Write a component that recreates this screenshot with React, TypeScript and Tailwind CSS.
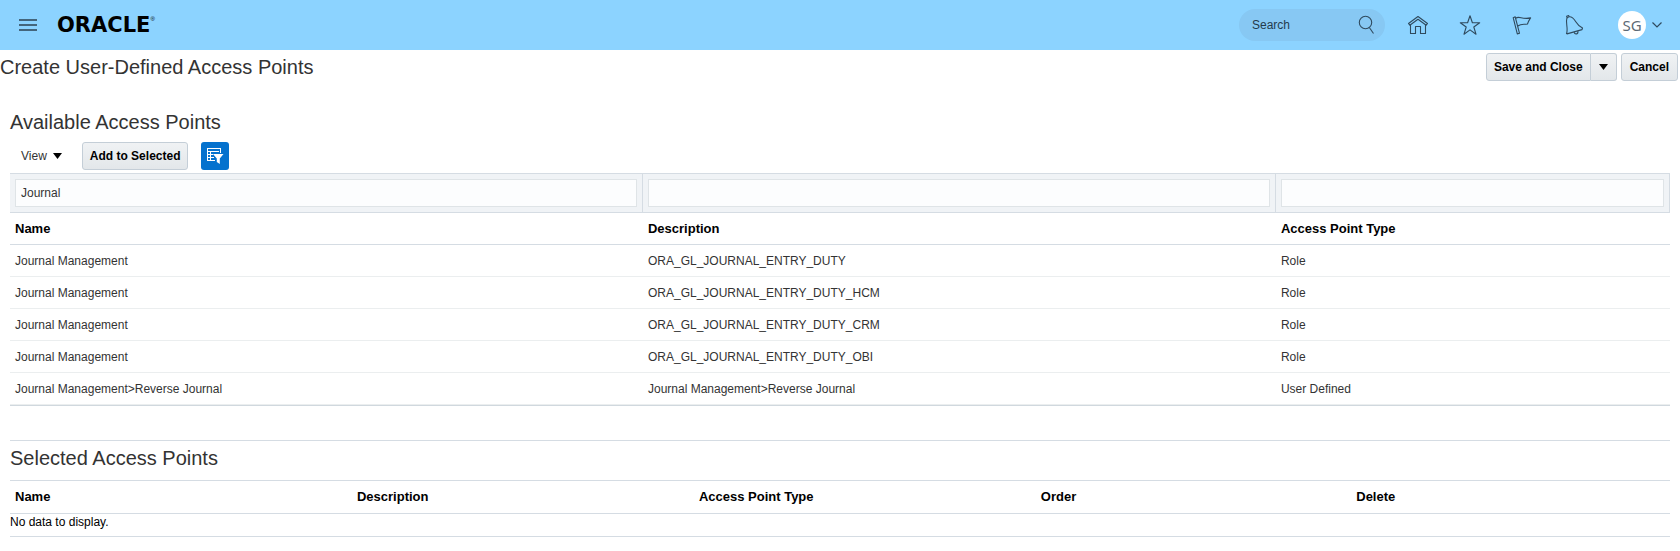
import { useState } from "react";
import type { ReactNode } from "react";

const accessPoints = [
  { name: "Journal Management", description: "ORA_GL_JOURNAL_ENTRY_DUTY", type: "Role" },
  { name: "Journal Management", description: "ORA_GL_JOURNAL_ENTRY_DUTY_HCM", type: "Role" },
  { name: "Journal Management", description: "ORA_GL_JOURNAL_ENTRY_DUTY_CRM", type: "Role" },
  { name: "Journal Management", description: "ORA_GL_JOURNAL_ENTRY_DUTY_OBI", type: "Role" },
  {
    name: "Journal Management>Reverse Journal",
    description: "Journal Management>Reverse Journal",
    type: "User Defined",
  },
];

const buttonStyle =
  "h-7 border border-[#c4ced7] bg-linear-to-b from-[#f0f2f4] to-[#e3e7ea] text-xs font-bold text-black";

function NavIcon({ label, children }: { label: string; children: ReactNode }) {
  return (
    <button aria-label={label} className="text-[#2f4a5e]">
      <svg width="24" height="24" viewBox="0 0 24 24" fill="none" stroke="currentColor" strokeWidth="1.1" strokeLinejoin="round">
        {children}
      </svg>
    </button>
  );
}

function Header() {
  return (
    <header className="flex h-[50px] items-center justify-between bg-[#8cd3ff] pr-[18px] pl-[19px]">
      <div className="flex items-center gap-5">
        <button aria-label="Navigator">
          <svg width="18" height="12" viewBox="0 0 18 12" stroke="#2b4252" strokeWidth="1.4">
            <path d="M0 1h18M0 6h18M0 11h18" />
          </svg>
        </button>
        <a href="#" className="flex text-black">
          <span className="font-['DejaVu_Sans',sans-serif] text-[21px] leading-6 font-bold">ORACLE</span>
          <span className="text-[6px] leading-3">®</span>
        </a>
      </div>

      <div className="flex items-center">
        <label className="mr-[21px] flex h-8 w-[146px] items-center rounded-full bg-[#87c8f3] pr-[10px] pl-[13px]">
          <input
            type="text"
            aria-label="Search"
            placeholder="Search"
            className="min-w-0 flex-1 bg-transparent text-xs text-[#243b4c] outline-none placeholder:text-[#243b4c]"
          />
          <svg width="18" height="20" viewBox="0 0 18 20" fill="none" stroke="#2f4a5e" strokeWidth="1.1">
            <circle cx="8.5" cy="7.5" r="6.2" />
            <path d="M12.3 12.5 16.5 18.5" />
          </svg>
        </label>
        <nav className="flex items-center gap-7">
          <NavIcon label="Home">
            <path d="M2.5 10.5 12 3.5l9.5 7-1.3 1.7L12 6.2l-8.2 6z" />
            <path d="M4.5 11.7V20.5h5v-7h5v7h5v-8.8" />
          </NavIcon>
          <NavIcon label="Favorites and Recent Items">
            <path d="M12 2.7l2.4 7h7.3L15.8 14l2.2 7.2-6-4.3-6 4.3L8.2 14 2.3 9.7h7.3z" />
          </NavIcon>
          <NavIcon label="Watchlist">
            <path d="M3.2 4.7 5.2 3.8 9.5 20.3 7.3 20.9z" />
            <path d="M5.6 5.4C9 2.2 12 7 20.600 4.900C19.300 7 18.500 7.700 17.500 11C13.500 11.700 11.500 10.400 7.700 13" />
          </NavIcon>
          <NavIcon label="Notifications">
            <path d="M4.5 20.6C6.500 16 3.400 9.500 4.800 5.600C6 3.200 8.600 3.400 10.600 4.900C14.600 8 13.600 11.800 20.500 15L20 16.600L5 20.900z" />
            <path d="M5.2 4.900 4.600 3.200 6.600 2.500 7.300 3.800M12 19.200C13.200 22.200 16.600 21 15.800 18.100" />
          </NavIcon>
        </nav>
        <button aria-label="Settings and Actions" className="ml-8 flex items-center gap-[6px]">
          <span className="flex size-7 items-center justify-center rounded-full bg-white font-['Noto_Sans',sans-serif] text-[15px] text-[#5c6a75]">
            SG
          </span>
          <svg width="10" height="6" viewBox="0 0 10 6" fill="none" stroke="#2f4a5e" strokeWidth="1.2">
            <path d="M.5.5 5 5 9.5.5" />
          </svg>
        </button>
      </div>
    </header>
  );
}

function Caret() {
  return (
    <svg width="9" height="6" viewBox="0 0 9 6" fill="#000">
      <path d="M0 0h9L4.5 6z" />
    </svg>
  );
}

function AvailableAccessPoints() {
  const [filters, setFilters] = useState({ name: "Journal", description: "", type: "" });

  function filterCell(key: "name" | "description" | "type", label: string) {
    return (
      <td className="border-y border-r border-[#d5dce3] bg-[#f0f3f6] p-[5px]">
        <input
          type="text"
          aria-label={label}
          value={filters[key]}
          onChange={(e) => setFilters({ ...filters, [key]: e.target.value })}
          className="block h-7 w-full border border-[#dfe4e7] bg-[#fcfdfe] px-[5px] text-[#333] outline-none"
        />
      </td>
    );
  }

  return (
    <section className="mt-6 px-[10px]">
      <h2 className="text-xl leading-7">Available Access Points</h2>
      <div className="mt-[6px] mb-[3px] flex items-center pl-[11px]">
        <button className="mr-5 flex items-center gap-[6px] text-xs">
          View <Caret />
        </button>
        <button className={`${buttonStyle} mr-[13px] rounded-[3px] px-[7px]`}>Add to Selected</button>
        <button
          aria-label="Query By Example"
          className="flex size-7 items-center justify-center rounded-[3px] bg-[#0572ce]"
        >
          <svg width="18" height="18" viewBox="0 0 18 18" fill="none">
            <path d="M1 1.500H15M1 4.500H13M1 7.500H7M1 10.500H8M1 13.500H9M1.500 1V14M4.500 4V13M14.500 1V6" stroke="#fff" />
            <path d="M7 7H17.500L13.800 11.500V17L10.800 15V11.500z" fill="#fff" />
          </svg>
        </button>
      </div>

      <table className="w-full table-fixed border-separate border-spacing-0 border-b border-[#d0d8de] text-left text-xs text-[#333]">
        <colgroup>
          <col className="w-[38.13%]" />
          <col className="w-[38.13%]" />
          <col />
        </colgroup>
        <thead>
          <tr>
            {filterCell("name", "Filter by name")}
            {filterCell("description", "Filter by description")}
            {filterCell("type", "Filter by access point type")}
          </tr>
          <tr className="h-8 text-[13px] text-black">
            <th className="border-b border-[#d5dce3] px-[5px]">Name</th>
            <th className="border-b border-[#d5dce3] px-[5px]">Description</th>
            <th className="border-b border-[#d5dce3] px-[5px]">Access Point Type</th>
          </tr>
        </thead>
        <tbody>
          {accessPoints.map((point) => (
            <tr key={point.description} className="h-8">
              <td className="border-b border-[#ebeeef] px-[5px]">{point.name}</td>
              <td className="border-b border-[#ebeeef] px-[5px]">{point.description}</td>
              <td className="border-b border-[#ebeeef] px-[5px]">{point.type}</td>
            </tr>
          ))}
        </tbody>
      </table>
    </section>
  );
}

function SelectedAccessPoints() {
  const th = "border-y border-[#d5dce3] px-[5px]";

  return (
    <section className="mx-[10px] mt-[34px] border-t border-[#d5dce3]">
      <h2 className="pt-[3px] pb-2 text-xl leading-7">Selected Access Points</h2>
      <table className="w-full table-fixed border-separate border-spacing-0 text-left text-xs text-black">
        <colgroup>
          <col className="w-[20.6%]" />
          <col className="w-[20.6%]" />
          <col className="w-[20.6%]" />
          <col className="w-[19%]" />
          <col />
        </colgroup>
        <thead>
          <tr className="h-[34px] text-[13px]">
            <th className={th}>Name</th>
            <th className={th}>Description</th>
            <th className={th}>Access Point Type</th>
            <th className={th}>Order</th>
            <th className={th}>Delete</th>
          </tr>
        </thead>
        <tbody>
          <tr>
            <td colSpan={5} className="border-b border-[#d5dce3] pb-[6px]">
              No data to display.
            </td>
          </tr>
        </tbody>
      </table>
    </section>
  );
}

export default function App() {
  return (
    <div className="min-h-screen bg-white font-['Liberation_Sans',Arial,sans-serif] text-[#333]">
      <Header />
      <main>
        <div className="flex h-[34px] items-center justify-between pr-[2px]">
          <h1 className="text-xl">Create User-Defined Access Points</h1>
          <div className="flex gap-1">
            <div className="flex">
              <button className={`${buttonStyle} rounded-l-[3px] px-[7px]`}>Save and Close</button>
              <button aria-label="More save options" className={`${buttonStyle} rounded-r-[3px] border-l-0 px-2`}>
                <Caret />
              </button>
            </div>
            <button className={`${buttonStyle} rounded-[3px] px-2`}>Cancel</button>
          </div>
        </div>
        <AvailableAccessPoints />
        <SelectedAccessPoints />
      </main>
    </div>
  );
}
